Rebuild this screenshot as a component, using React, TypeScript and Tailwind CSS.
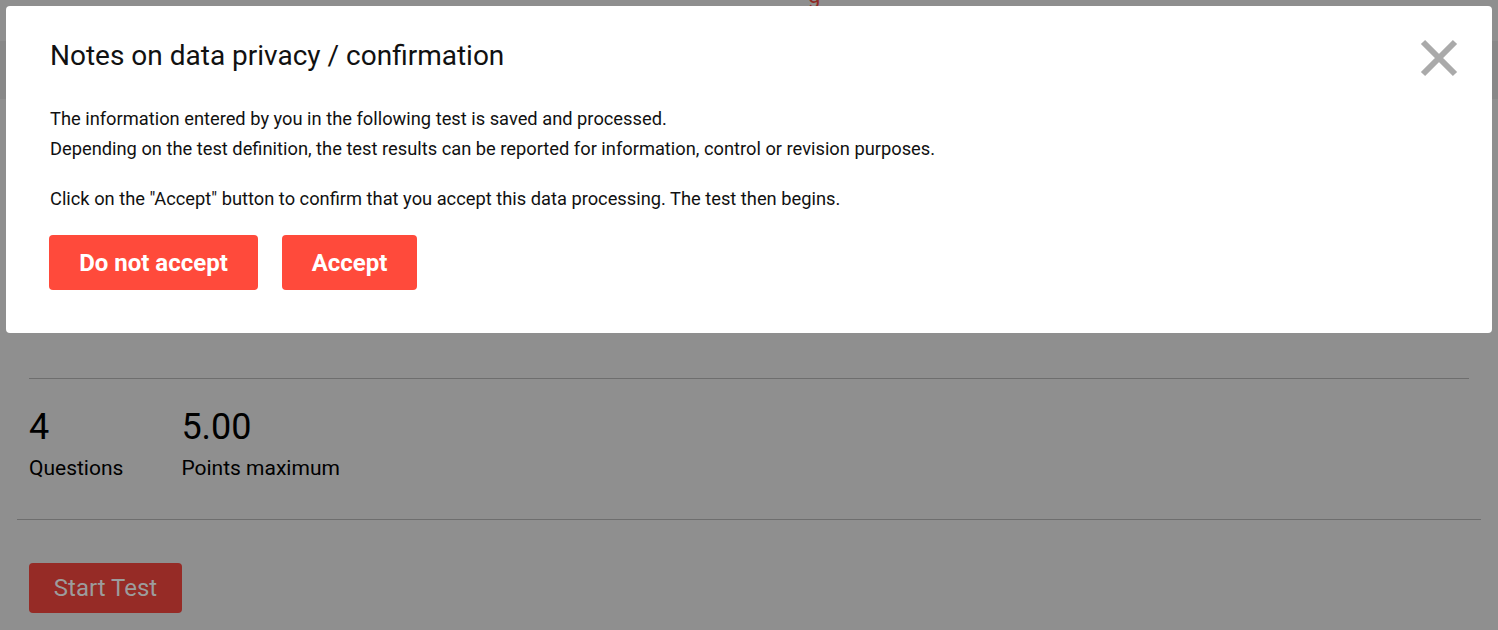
import React from "react";

const font = { fontFamily: "Roboto, 'Noto Sans', sans-serif" };

function Stat({ value, label }: { value: string; label: string }) {
  return (
    <div className="flex flex-col">
      <span className="text-[36px] leading-[40px] text-black">{value}</span>
      <span className="text-[21px] leading-[28px] mt-[7px] text-black">{label}</span>
    </div>
  );
}

function CloseIcon() {
  return (
    <svg width="38" height="38" viewBox="0 0 38 38">
      <path d="M3 3 L35 35 M35 3 L3 35" stroke="#aaaaaa" strokeWidth="6" />
    </svg>
  );
}

export default function App() {
  return (
    <div className="relative w-[1498px] h-[630px] overflow-hidden bg-[#8f8f8f]" style={font}>
      {/* page under the dimmed overlay */}
      <div className="h-[6px] relative">
        <span className="absolute left-[808px] top-[-21px] text-[22px] text-[#8f2a24]">g</span>
      </div>
      <div className="mt-[35px] h-[58px] bg-[#888888]" />
      <div className="px-[17px]">
        <div className="mx-[12px] mt-[279px] border-t border-[#6e6e6e]" />
        <div className="flex gap-[58px] px-[12px] pt-[28px] pb-[37px]">
          <Stat value="4" label="Questions" />
          <Stat value="5.00" label="Points maximum" />
        </div>
        <div className="border-t border-[#6e6e6e]" />
        <div className="px-[12px] pt-[43px]">
          <button className="w-[153px] h-[50px] rounded-[4px] bg-[#962b26] text-[24px] text-[#9c9c9c]">
            Start Test
          </button>
        </div>
      </div>

      {/* modal */}
      <div className="absolute left-[6px] top-[6px] w-[1486px] h-[327px] bg-white rounded-[4px] pl-[44px] pr-[34px] pt-[28px]">
        <div className="flex items-start justify-between">
          <h2 className="text-[28px] leading-[44px] text-[#111]">Notes on data privacy / confirmation</h2>
          <div className="mt-[5px]">
            <CloseIcon />
          </div>
        </div>
        <div className="mt-[26px] text-[18.3px] leading-[30px] text-[#111]">
          <p>The information entered by you in the following test is saved and processed.</p>
          <p>Depending on the test definition, the test results can be reported for information, control or revision purposes.</p>
          <p className="mt-[20px]">Click on the "Accept" button to confirm that you accept this data processing. The test then begins.</p>
        </div>
        <div className="flex gap-[24px] mt-[21px] -ml-[1px]">
          <button className="w-[209px] h-[55px] rounded-[4px] bg-[#ff4a3b] text-white text-[24px] font-bold">
            Do not accept
          </button>
          <button className="w-[135px] h-[55px] rounded-[4px] bg-[#ff4a3b] text-white text-[24px] font-bold">
            Accept
          </button>
        </div>
      </div>
    </div>
  );
}
